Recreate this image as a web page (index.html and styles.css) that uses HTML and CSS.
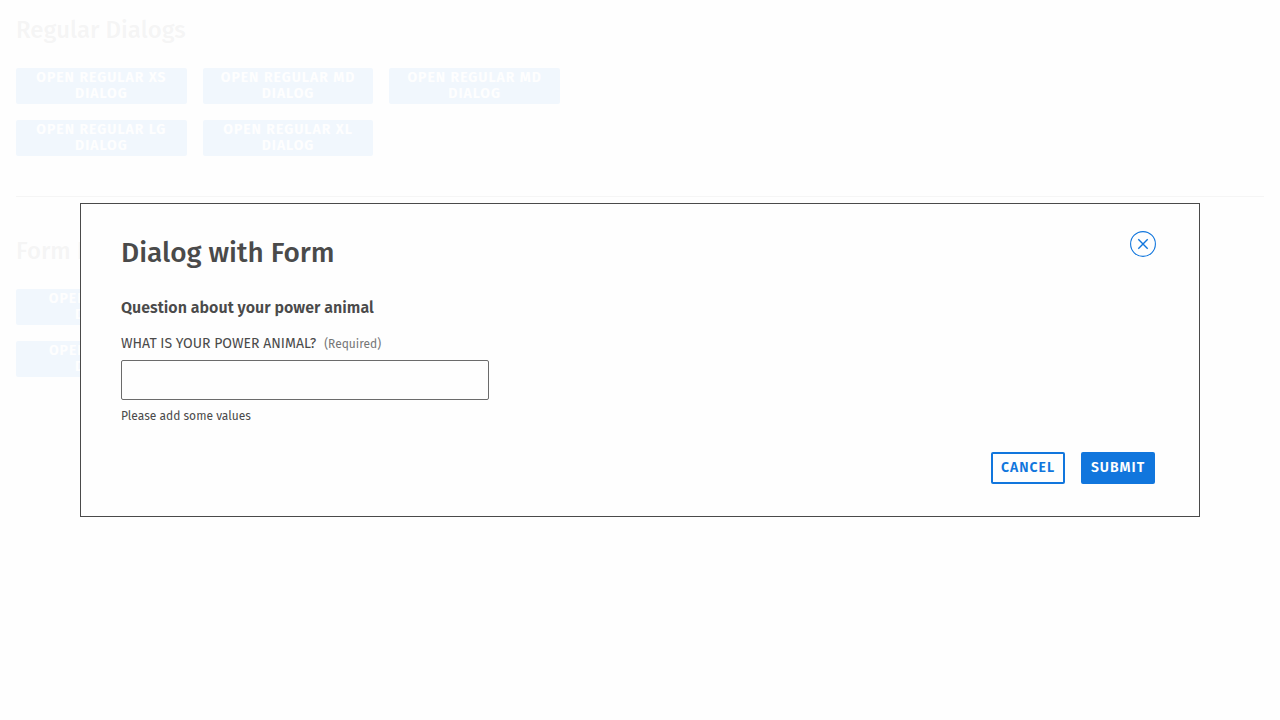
FILE: index.html
```html
<!DOCTYPE html>
<html lang="en">
<head>
<meta charset="utf-8">
<meta name="viewport" content="width=device-width, initial-scale=1">
<title>Dialogs</title>
<link rel="stylesheet" href="styles.css">
</head>
<body>
<main class="page">
  <section class="section">
    <h2 class="section-title">Regular Dialogs</h2>
    <div class="button-grid">
      <button type="button" class="button button-primary">Open regular XS dialog</button>
      <button type="button" class="button button-primary">Open regular MD dialog</button>
      <button type="button" class="button button-primary">Open regular MD dialog</button>
      <button type="button" class="button button-primary">Open regular LG dialog</button>
      <button type="button" class="button button-primary">Open regular XL dialog</button>
    </div>
  </section>
  <hr class="divider">
  <section class="section">
    <h2 class="section-title">Form Dialogs</h2>
    <div class="button-grid">
      <button type="button" class="button button-primary">Open form XS dialog</button>
      <button type="button" class="button button-primary">Open form MD dialog</button>
      <button type="button" class="button button-primary">Open form MD dialog</button>
      <button type="button" class="button button-primary">Open form LG dialog</button>
    </div>
  </section>
</main>
<div class="overlay">
  <div class="dialog" role="dialog" aria-modal="true" aria-labelledby="dialog-title">
    <header class="dialog-header">
      <h1 class="dialog-title" id="dialog-title">Dialog with Form</h1>
      <button type="button" class="close" aria-label="Close">
        <svg class="close-icon" viewBox="0 0 26 26" fill="none" stroke="currentColor" aria-hidden="true">
          <circle cx="13" cy="13" r="12.4" stroke-width="1.1"/>
          <path d="M8.3 8.3l9.4 9.4M17.7 8.3l-9.4 9.4" stroke-width="1.4"/>
        </svg>
      </button>
    </header>
    <form class="form">
      <h2 class="form-title">Question about your power animal</h2>
      <div class="field">
        <label class="label" for="animal"><span class="label-text">What is your power animal?</span><span class="label-note">(Required)</span></label>
        <input class="input" id="animal" type="text" aria-describedby="animal-help" required>
        <p class="help" id="animal-help">Please add some values</p>
      </div>
      <div class="actions">
        <button type="button" class="button button-small button-outline">Cancel</button>
        <button type="submit" class="button button-small button-primary">Submit</button>
      </div>
    </form>
  </div>
</div>
</body>
</html>
```
FILE: styles.css
```css
* {
  box-sizing: border-box;
}

body {
  margin: 0;
  background: #fefefe;
  color: #4a4a4a;
  font-family: "Fira Sans", "Noto Sans", sans-serif;
}

h1, h2, p {
  margin: 0;
}

.page {
  padding: 16px;
}

.section-title {
  margin-bottom: 24px;
  font-size: 24px;
  font-weight: 500;
  line-height: 28px;
}

.button-grid {
  display: grid;
  grid-template-columns: repeat(3, 1fr);
  gap: 16px;
  max-width: 544px;
}

.button {
  min-height: 36px;
  padding: 0 16px;
  border: 2px solid #1176dd;
  border-radius: 2px;
  font-family: inherit;
  font-size: 14px;
  font-weight: 600;
  line-height: 16px;
  letter-spacing: 1px;
  text-transform: uppercase;
}

.button-grid .button {
  border: 0;
}

.button-primary {
  background: #1176dd;
  color: #fefefe;
}

.button-outline {
  background: #fefefe;
  color: #1176dd;
}

.button-small {
  min-width: 74px;
  min-height: 32px;
  padding: 0 6px;
}

.divider {
  margin: 40px 0;
  border: 0;
  border-top: 1px solid #4a4a4a;
}

.overlay {
  position: fixed;
  inset: 0;
  display: flex;
  align-items: center;
  padding: 0 80px;
  background: rgba(254, 254, 254, 0.95);
}

.dialog {
  flex: 1;
  padding: 27px 0 32px;
  border: 1px solid #4a4a4a;
  background: #fefefe;
}

.dialog-header {
  display: flex;
  justify-content: space-between;
  align-items: flex-start;
  margin-bottom: 25px;
  padding: 0 43px 0 40px;
}

.dialog-title {
  padding-top: 4px;
  font-size: 28px;
  font-weight: 500;
  line-height: 36px;
}

.close {
  width: 26px;
  height: 26px;
  padding: 0;
  border: 0;
  background: none;
  color: #1176dd;
}

.close-icon {
  display: block;
}

.form {
  padding: 0 44px 0 40px;
}

.form-title {
  margin-bottom: 16px;
  font-size: 16px;
  font-weight: 600;
  line-height: 24px;
}

.label {
  display: flex;
  align-items: center;
  gap: 8px;
  margin-bottom: 8px;
  line-height: 16px;
}

.label-text {
  font-size: 14px;
  text-transform: uppercase;
}

.label-note {
  color: #767676;
  font-size: 12px;
}

.input {
  display: block;
  width: 100%;
  max-width: 368px;
  height: 40px;
  padding: 0 8px;
  border: 1px solid #6b6b6b;
  border-radius: 2px;
  background: #fefefe;
  color: inherit;
  font: inherit;
}

.help {
  margin-top: 8px;
  font-size: 12px;
  line-height: 16px;
}

.actions {
  display: flex;
  justify-content: flex-end;
  gap: 16px;
  margin-top: 28px;
}
```
